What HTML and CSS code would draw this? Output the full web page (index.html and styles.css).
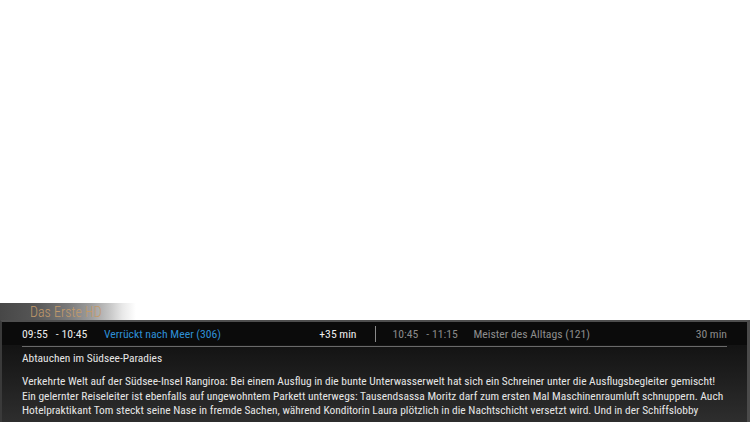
FILE: index.html
```html
<!DOCTYPE html>
<html lang="de">
<head>
<meta charset="utf-8">
<title>EPG Info</title>
<link rel="stylesheet" href="styles.css">
</head>
<body>
<div class="screen">
  <div class="tab"><span class="channel">Das Erste HD</span></div>
  <div class="panel">
    <div class="head">
      <div class="now">
        <span class="time">09:55&nbsp;&nbsp; - 10:45</span>
        <span class="title now-title">Verrückt nach Meer (306)</span>
        <span class="remain">+35 min</span>
      </div>
      <div class="sep"></div>
      <div class="next">
        <span class="time">10:45&nbsp;&nbsp; - 11:15</span>
        <span class="title">Meister des Alltags (121)</span>
        <span class="dur">30 min</span>
      </div>
    </div>
    <div class="rule"></div>
    <div class="body">
      <p class="subtitle">Abtauchen im Südsee-Paradies</p>
      <p class="desc">Verkehrte Welt auf der Südsee-Insel Rangiroa: Bei einem Ausflug in die bunte Unterwasserwelt hat sich ein Schreiner unter die Ausflugsbegleiter gemischt! Ein gelernter Reiseleiter ist ebenfalls auf ungewohntem Parkett unterwegs: Tausendsassa Moritz darf zum ersten Mal Maschinenraumluft schnuppern. Auch Hotelpraktikant Tom steckt seine Nase in fremde Sachen, während Konditorin Laura plötzlich in die Nachtschicht versetzt wird. Und in der Schiffslobby</p>
    </div>
  </div>
</div>
</body>
</html>
```
FILE: styles.css
```css
html, body {
  margin: 0;
  padding: 0;
  background: #ffffff;
}
.screen {
  width: 750px;
  height: 422px;
  display: flex;
  flex-direction: column;
  justify-content: flex-end;
  overflow: hidden;
  font-family: "Roboto Condensed", "Liberation Sans Narrow", Roboto, sans-serif;
}
.tab {
  flex-shrink: 0;
  width: 136px;
  height: 17px;
  background: linear-gradient(90deg, #474747 0%, #555555 25%, #7a7a7a 50%, #a0a0a0 68%, #c4c4c4 80%, #e8e8e8 90%, rgba(255,255,255,0) 100%);
  display: flex;
  align-items: flex-end;
}
.channel {
  margin-left: 30px;
  color: #c39a6a;
  font-size: 14px;
  line-height: 15px;
  font-weight: 300;
}
.panel {
  flex-shrink: 0;
  height: 100px;
  overflow: hidden;
  background: linear-gradient(180deg, #101010 0%, #141414 25%, #1e1e1e 55%, #2e2e2e 100%);
  border-top: 2px solid #4e4e4e;
  border-left: 2px solid #3a3a3a;
  border-right: 3px solid #4a4a4a;
  display: flex;
  flex-direction: column;
}
.head {
  flex-shrink: 0;
  height: 23px;
  background: #0b0b0b;
  display: flex;
  align-items: center;
  padding: 0 20px;
  font-size: 11.7px;
}
.now, .next {
  display: flex;
  align-items: center;
  flex: 1;
}
.now { padding-right: 18px; }
.next { padding-left: 17px; }
.sep {
  width: 1px;
  height: 16px;
  background: #8a8a8a;
}
.now .time { color: #eaeaea; width: 82px; }
.now-title { color: #2e8fd6; }
.remain { margin-left: auto; color: #eeeeee; }
.next .time { color: #8a8a8a; width: 81px; }
.next .title { color: #8e8e8e; }
.dur { margin-left: auto; color: #8a8a8a; }
.rule {
  flex-shrink: 0;
  height: 1px;
  margin: 1px 20px 0;
  background: #6a6a6a;
}
.body {
  padding: 4px 18px 0 20px;
  color: #e6e6e6;
  font-size: 11.45px;
}
.subtitle {
  margin: 0;
  line-height: 15px;
}
.desc {
  margin: 8px 0 0;
  line-height: 14.5px;
}
```
